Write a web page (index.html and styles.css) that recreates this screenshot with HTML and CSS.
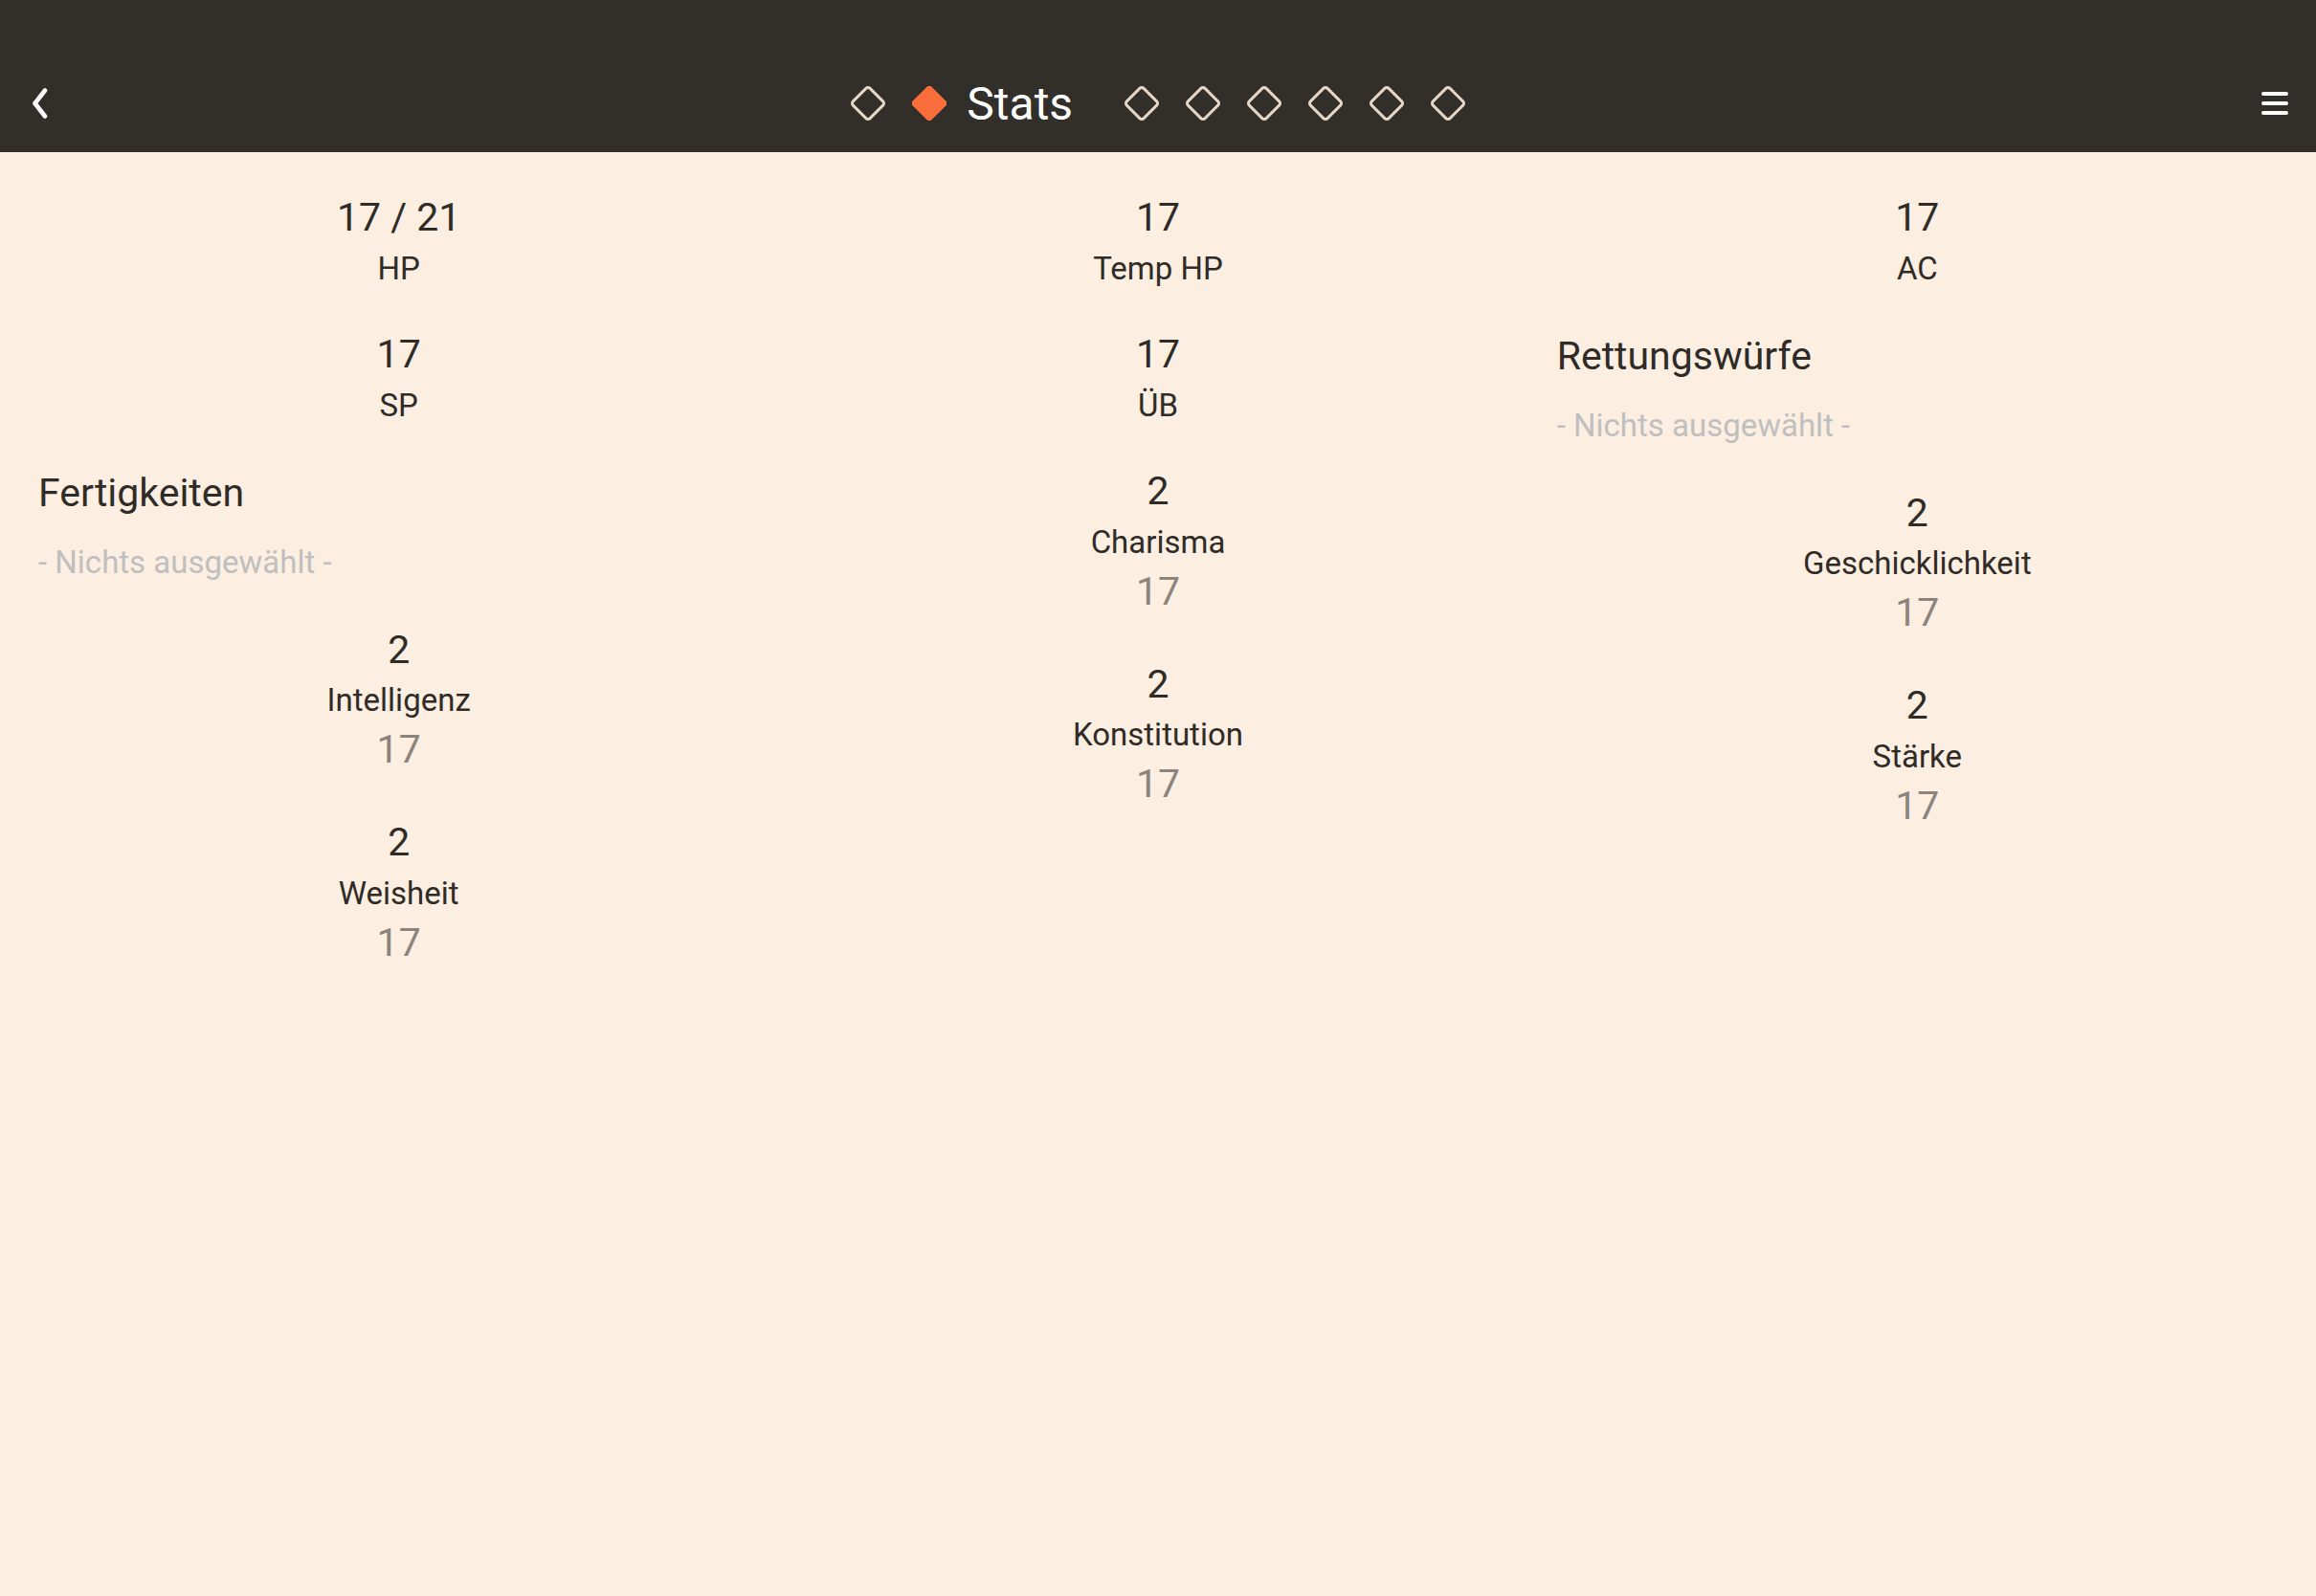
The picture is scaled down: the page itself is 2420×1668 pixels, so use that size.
FILE: index.html
```html
<!DOCTYPE html>
<html lang="de">
<head>
<meta charset="utf-8">
<title>Stats</title>
<link rel="stylesheet" href="styles.css">
</head>
<body>
<header class="appbar">
  <button class="icon-btn back" aria-label="Zurück">
    <svg width="20" height="32" viewBox="0 0 20 32"><polyline points="15,2.5 4.5,16 15,29.5" fill="none" stroke="#ffffff" stroke-width="4.6" stroke-linecap="round" stroke-linejoin="round"/></svg>
  </button>
  <nav class="pager">
    <span class="slot"><svg class="diamond" viewBox="0 0 36 36"><rect x="5.45" y="5.45" width="25.1" height="25.1" rx="3" transform="rotate(45 18 18)" fill="none" stroke="#e6d7c6" stroke-width="3"/></svg></span>
    <span class="slot active"><svg class="diamond" viewBox="0 0 36 36"><rect x="4" y="4" width="28" height="28" rx="3.5" transform="rotate(45 18 18)" fill="#fa6e3c"/></svg><span class="title">Stats</span></span>
    <span class="slot"><svg class="diamond" viewBox="0 0 36 36"><rect x="5.45" y="5.45" width="25.1" height="25.1" rx="3" transform="rotate(45 18 18)" fill="none" stroke="#e6d7c6" stroke-width="3"/></svg></span>
    <span class="slot"><svg class="diamond" viewBox="0 0 36 36"><rect x="5.45" y="5.45" width="25.1" height="25.1" rx="3" transform="rotate(45 18 18)" fill="none" stroke="#e6d7c6" stroke-width="3"/></svg></span>
    <span class="slot"><svg class="diamond" viewBox="0 0 36 36"><rect x="5.45" y="5.45" width="25.1" height="25.1" rx="3" transform="rotate(45 18 18)" fill="none" stroke="#e6d7c6" stroke-width="3"/></svg></span>
    <span class="slot"><svg class="diamond" viewBox="0 0 36 36"><rect x="5.45" y="5.45" width="25.1" height="25.1" rx="3" transform="rotate(45 18 18)" fill="none" stroke="#e6d7c6" stroke-width="3"/></svg></span>
    <span class="slot"><svg class="diamond" viewBox="0 0 36 36"><rect x="5.45" y="5.45" width="25.1" height="25.1" rx="3" transform="rotate(45 18 18)" fill="none" stroke="#e6d7c6" stroke-width="3"/></svg></span>
    <span class="slot"><svg class="diamond" viewBox="0 0 36 36"><rect x="5.45" y="5.45" width="25.1" height="25.1" rx="3" transform="rotate(45 18 18)" fill="none" stroke="#e6d7c6" stroke-width="3"/></svg></span>
  </nav>
  <button class="icon-btn menu" aria-label="Menü">
    <svg width="30" height="26" viewBox="0 0 30 26"><g stroke="#ffffff" stroke-width="4" stroke-linecap="round"><line x1="3" y1="3" x2="27" y2="3"/><line x1="3" y1="13" x2="27" y2="13"/><line x1="3" y1="23" x2="27" y2="23"/></g></svg>
  </button>
</header>

<main class="sheet">
  <section class="col">
    <div class="stat">
      <div class="stat-value">17 / 21</div>
      <div class="stat-label">HP</div>
    </div>
    <div class="stat">
      <div class="stat-value">17</div>
      <div class="stat-label">SP</div>
    </div>
    <div class="group">
      <h2 class="group-title">Fertigkeiten</h2>
      <div class="placeholder">- Nichts ausgewählt -</div>
    </div>
    <div class="stat ability">
      <div class="stat-value">2</div>
      <div class="stat-label">Intelligenz</div>
      <div class="stat-base">17</div>
    </div>
    <div class="stat ability">
      <div class="stat-value">2</div>
      <div class="stat-label">Weisheit</div>
      <div class="stat-base">17</div>
    </div>
  </section>

  <section class="col">
    <div class="stat">
      <div class="stat-value">17</div>
      <div class="stat-label">Temp HP</div>
    </div>
    <div class="stat">
      <div class="stat-value">17</div>
      <div class="stat-label">ÜB</div>
    </div>
    <div class="stat ability">
      <div class="stat-value">2</div>
      <div class="stat-label">Charisma</div>
      <div class="stat-base">17</div>
    </div>
    <div class="stat ability">
      <div class="stat-value">2</div>
      <div class="stat-label">Konstitution</div>
      <div class="stat-base">17</div>
    </div>
  </section>

  <section class="col">
    <div class="stat">
      <div class="stat-value">17</div>
      <div class="stat-label">AC</div>
    </div>
    <div class="group">
      <h2 class="group-title">Rettungswürfe</h2>
      <div class="placeholder">- Nichts ausgewählt -</div>
    </div>
    <div class="stat ability">
      <div class="stat-value">2</div>
      <div class="stat-label">Geschicklichkeit</div>
      <div class="stat-base">17</div>
    </div>
    <div class="stat ability">
      <div class="stat-value">2</div>
      <div class="stat-label">Stärke</div>
      <div class="stat-base">17</div>
    </div>
  </section>
</main>
</body>
</html>
```
FILE: styles.css
```css
* {
  box-sizing: border-box;
}

html, body {
  margin: 0;
  padding: 0;
}

body {
  width: 2420px;
  min-height: 1668px;
  background: #fdeee2;
  color: #2f2b27;
  font-family: Roboto, "Noto Sans", "Liberation Sans", sans-serif;
}

/* ---------- app bar ---------- */
.appbar {
  height: 159px;
  padding-top: 56px;
  background: #322e2a;
  display: grid;
  grid-template-columns: 1fr auto 1fr;
  align-items: center;
}

.icon-btn {
  background: none;
  border: 0;
  padding: 0;
  margin: 0;
  display: flex;
  align-items: center;
  height: 103px;
}

.icon-btn svg {
  display: block;
}

.back {
  justify-self: start;
  padding-left: 32px;
}

.menu {
  justify-self: end;
  padding-right: 28px;
}

.pager {
  display: flex;
  align-items: center;
  height: 103px;
}

.slot {
  display: flex;
  align-items: center;
  justify-content: center;
  width: 64px;
  height: 103px;
}

.slot.active {
  width: auto;
  justify-content: flex-start;
  padding-left: 14px;
  padding-right: 40px;
}

.diamond {
  width: 36px;
  height: 36px;
  display: block;
  flex: none;
}

.title {
  margin-left: 21.5px;
  font-size: 48px;
  line-height: 56px;
  color: #ffffff;
  position: relative;
  top: 1px;
}

/* ---------- content ---------- */
.sheet {
  display: grid;
  grid-template-columns: repeat(3, 1fr);
  column-gap: 40px;
  padding: 45px 40px;
}

.col {
  display: flex;
  flex-direction: column;
  gap: 47.5px;
  min-width: 0;
}

.stat {
  display: flex;
  flex-direction: column;
  align-items: center;
  text-align: center;
}

.stat.ability {
  padding-bottom: 2.5px;
}

.stat-value {
  font-size: 41px;
  line-height: 47px;
}

.stat-label {
  font-size: 33px;
  line-height: 38px;
  margin-top: 10.5px;
}

.stat-base {
  font-size: 41px;
  line-height: 47px;
  margin-top: 9px;
  color: #8b847d;
}

.group {
  display: flex;
  flex-direction: column;
  padding-top: 1.5px;
  padding-bottom: 1.5px;
}

.group-title {
  margin: 0;
  font-size: 41px;
  line-height: 47px;
  font-weight: 400;
}

.placeholder {
  margin-top: 30px;
  font-size: 33px;
  line-height: 38px;
  color: #bfbfbf;
}
```
